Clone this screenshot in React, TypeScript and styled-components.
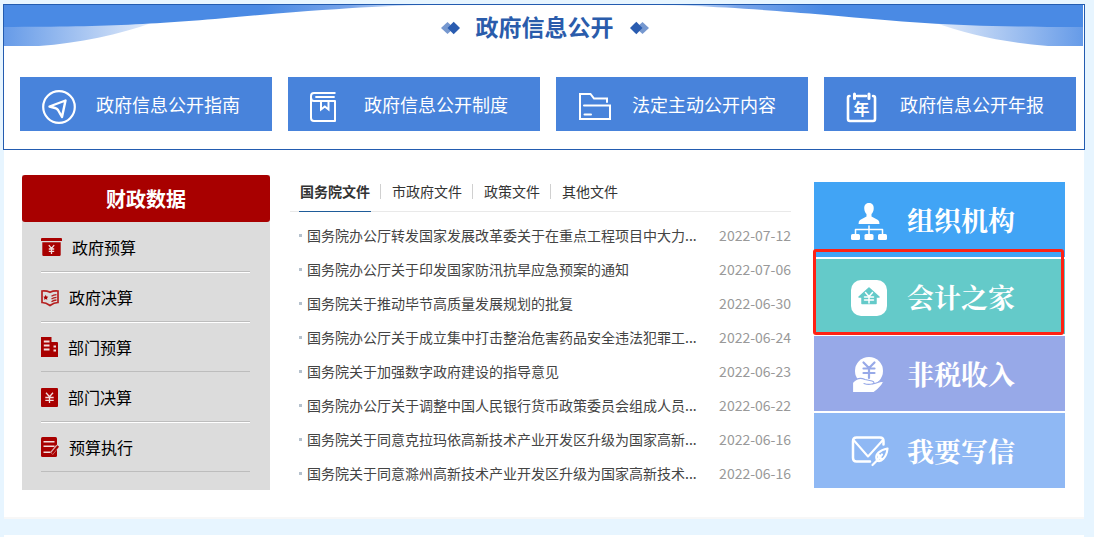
import React from "react";
import styled, { createGlobalStyle } from "styled-components";

const sans = '"Noto Sans CJK SC", "Noto Sans", sans-serif';
const serif = '"Noto Serif CJK SC", "Source Han Serif SC", "Noto Sans CJK SC", serif';

const GlobalStyle = createGlobalStyle`
  *, *::before, *::after { box-sizing: border-box; }
  body {
    margin: 0;
    background: #e7f5ff;
    font-family: ${sans};
    color: #333;
  }
  ul, h1, h2 { margin: 0; padding: 0; }
  ul { list-style: none; }
  a { color: inherit; text-decoration: none; }
  svg { display: block; flex: none; }
`;

const Page = styled.div`
  min-height: 100vh;
  padding: 4px 9px 0 3px;
  display: flex;
  flex-direction: column;
`;

const InfoSection = styled.section`
  border: 1px solid #235cb0;
  background: #fff;
  padding-bottom: 18px;
`;

const Banner = styled.header`
  display: grid;
  height: 41px;
  margin-right: 1px;
  > * { grid-area: 1 / 1; }
`;

const Wave = styled.svg`
  width: 100%;
  height: 41px;
`;

const BannerTitle = styled.div`
  display: flex;
  align-items: center;
  justify-content: center;
  gap: 16px;
  height: 41px;
  padding: 5px 0 0 2px;
`;

const TitleText = styled.h1`
  padding-bottom: 4px;
  font-size: 23px;
  line-height: 32px;
  font-weight: 700;
  color: #2a5cab;
`;

const InfoLinks = styled.nav`
  display: grid;
  grid-template-columns: repeat(4, 1fr);
  gap: 16px;
  padding: 31px 8px 0 16px;
`;

const InfoLink = styled.a`
  display: flex;
  align-items: center;
  gap: 20px;
  height: 54px;
  padding-left: 20px;
  background: #4883db;
  color: #fff;
  font-size: 18px;
  line-height: 26px;
  white-space: nowrap;
`;

const Panel = styled.main`
  display: flex;
  align-items: flex-start;
  margin: 0 1px;
  padding: 25px 19px 27px 18px;
  background: #fff;
  border-bottom: 2px solid #f7f7f7;
`;

const NextPanel = styled.div`
  flex: 1;
  min-height: 2px;
  margin: 16px 1px 0;
  background: #fff;
`;

const DataCard = styled.aside`
  flex: none;
  width: 248px;
  background: #dcdcdc;
`;

const DataHeading = styled.h2`
  height: 47px;
  border-radius: 3px;
  background: #a80000;
  color: #fff;
  font-size: 20px;
  line-height: 47px;
  font-weight: 700;
  text-align: center;
`;

const DataList = styled.ul`
  padding: 1px 20px 17px 19px;
`;

const DataItem = styled.li<{ $lit: boolean }>`
  border-bottom: 1px solid ${(p) => (p.$lit ? "#fff" : "#dcdcdc")};
`;

const DataLink = styled.a`
  display: flex;
  align-items: center;
  gap: 10px;
  height: 49px;
  border-bottom: 1px solid #bdbdbd;
  color: #000;
  font-size: 16px;
  line-height: 24px;
`;

const News = styled.section`
  flex: 1;
  min-width: 0;
  margin: 0 23px 0 20px;
`;

const Tabs = styled.div`
  display: flex;
  height: 37px;
  padding-left: 9px;
  border-bottom: 1px solid #e9e9e9;
`;

const TabCell = styled.div`
  display: flex;
  & + &::before {
    content: "";
    width: 1px;
    height: 15px;
    margin: 9px 10px 0 9px;
    background: #d0d0d0;
  }
`;

const Tab = styled.button<{ $active: boolean }>`
  height: 37px;
  padding: 0 1px 3px;
  border: 0;
  border-bottom: 1px solid ${(p) => (p.$active ? "#1f5c99" : "transparent")};
  background: none;
  color: #333;
  font-family: inherit;
  font-size: 14px;
  line-height: 33px;
  font-weight: ${(p) => (p.$active ? 700 : 400)};
  white-space: nowrap;
`;

const NewsList = styled.ul`
  padding: 6px 0 0 9px;
`;

const NewsItem = styled.li`
  display: flex;
  align-items: center;
  height: 34px;
  font-size: 14px;
  line-height: 20px;
  &::before {
    content: "";
    flex: none;
    width: 3px;
    height: 3px;
    margin-right: 5px;
    background: #b5c1cd;
  }
`;

const NewsLink = styled.a`
  flex: 1;
  min-width: 0;
  overflow: hidden;
  white-space: nowrap;
  color: #444;
`;

const NewsDate = styled.time`
  color: #999;
`;

const Services = styled.nav`
  flex: none;
  display: flex;
  flex-direction: column;
  gap: 2px;
  width: 251px;
  padding-top: 7px;
`;

const Service = styled.a<{ $color: string }>`
  position: relative;
  display: flex;
  align-items: center;
  gap: 18px;
  height: 75px;
  padding-left: 37px;
  background: ${(p) => p.$color};
  color: #fff;
  font-family: ${serif};
  font-size: 27px;
  line-height: 36px;
  font-weight: 700;
`;

const Highlight = styled.span`
  position: absolute;
  z-index: 1;
  inset: -10px 1px -1px -1px;
  border: 3px solid #ff2113;
  border-radius: 3px;
`;

const BannerWave = () => (
  <Wave viewBox="0 0 1080 41" preserveAspectRatio="none" aria-hidden="true">
    <defs>
      <linearGradient id="deep" gradientUnits="userSpaceOnUse" x1="0" x2="1080" y1="0" y2="0">
        <stop offset="0" stopColor="#4a8ae4" />
        <stop offset="0.24" stopColor="#4a8ae4" />
        <stop offset="0.32" stopColor="#78a5ea" />
        <stop offset="0.38" stopColor="#dfeafa" />
        <stop offset="0.62" stopColor="#dfeafa" />
        <stop offset="0.68" stopColor="#78a5ea" />
        <stop offset="0.76" stopColor="#4a8ae4" />
        <stop offset="1" stopColor="#4a8ae4" />
      </linearGradient>
      <linearGradient id="paleLeft" x1="0" x2="1" y1="0" y2="0">
        <stop offset="0" stopColor="#669be8" />
        <stop offset="1" stopColor="#e3ecfa" />
      </linearGradient>
      <linearGradient id="paleRight" x1="0" x2="1" y1="0" y2="0">
        <stop offset="0" stopColor="#e3ecfa" />
        <stop offset="1" stopColor="#669be8" />
      </linearGradient>
    </defs>
    <path d="M0 15H150V17C115 30 75 38 35 41H0Z" fill="url(#paleLeft)" />
    <path d="M1080 15H930V17C965 30 1005 38 1045 41H1080Z" fill="url(#paleRight)" />
    <path d="M0 0H440C400 0 350 2 256 10C160 19 110 22 0 22Z" fill="url(#deep)" />
    <path d="M1080 0H640C680 0 730 2 824 10C920 19 970 22 1080 22Z" fill="url(#deep)" />
  </Wave>
);

const Diamonds = ({ flip = false }: { flip?: boolean }) => (
  <svg width="19" height="14" viewBox="0 0 19 14" aria-hidden="true">
    <g transform={flip ? "translate(19 0) scale(-1 1)" : undefined}>
      <path d="M0 7L6.5 1L13 7L6.5 13Z" fill="#7698cf" />
      <path d="M6.5 7L12.7 .8L19 7L12.7 13.2Z" fill="#2a5cb0" />
    </g>
  </svg>
);

const LinkIcon = ({ children }: { children: React.ReactNode }) => (
  <svg width="36" height="42" viewBox="0 0 36 42" fill="none" stroke="#fff" strokeWidth="2" strokeLinecap="round" strokeLinejoin="round" aria-hidden="true">
    {children}
  </svg>
);

const infoLinks = [
  {
    label: "政府信息公开指南",
    icon: (
      <LinkIcon>
        <circle cx="19" cy="24" r="15.8" strokeWidth="2.2" />
        <path d="M9.5 23.5L25.5 17.5L22 34L18 27Q17 25.5 15 25Z" strokeWidth="2.4" />
      </LinkIcon>
    ),
  },
  {
    label: "政府信息公开制度",
    icon: (
      <LinkIcon>
        <path d="M27.5 10H6Q3 10 3 13V35Q3 38 6 38H27V18H6Q3 18 3 14.5" strokeLinecap="butt" />
        <path d="M8 14H26" strokeWidth="1.8" />
        <path d="M13 19V26.5L16.8 23.5L20.5 26.5V19" strokeWidth="2" strokeLinejoin="miter" />
      </LinkIcon>
    ),
  },
  {
    label: "法定主动公开内容",
    icon: (
      <LinkIcon>
        <path d="M31 19V15.5H18L14.5 11H4V36H34V22.5H8" strokeLinejoin="miter" />
        <path d="M8.5 31.5H15" />
      </LinkIcon>
    ),
  },
  {
    label: "政府信息公开年报",
    icon: (
      <LinkIcon>
        <path d="M5.5 13Q4 13 4 15V36Q4 38 6 38H29Q31 38 31 36V15Q31 13 29 13" strokeWidth="2.6" />
        <path d="M13 13H22" strokeWidth="2.6" />
        <path d="M10.5 11V15.5M25 11V15.5" strokeWidth="3" />
        <text x="17.5" y="31.5" textAnchor="middle" fontSize="16" fontWeight="700" fill="#fff" stroke="none">年</text>
      </LinkIcon>
    ),
  },
];

const DataIcon = ({ width, children }: { width: number; children: React.ReactNode }) => (
  <svg width={width} height="20" viewBox={`0 0 ${width} 20`} fill="none" stroke="#f3dede" strokeWidth="1.3" aria-hidden="true">
    {children}
  </svg>
);

const dataItems = [
  {
    label: "政府预算",
    lit: true,
    icon: (
      <DataIcon width={21}>
        <path d="M0 2Q0 1 1 1H20Q21 1 21 2V4H0Z" fill="#a80000" stroke="none" />
        <path d="M1.3 5.3H19.7V17.5Q19.7 19 18.5 19H2.5Q1.3 19 1.3 17.5Z" fill="#a80000" stroke="none" />
        <path d="M7.8 8.2L10.5 11.5L13.2 8.2M10.5 11.5V17M7.8 12H13.2M7.8 14.4H13.2" />
      </DataIcon>
    ),
  },
  {
    label: "政府决算",
    lit: true,
    icon: (
      <DataIcon width={18}>
        <path d="M1 4Q5.5 3.6 9 5.2Q12.5 3.6 17 4V15.5Q13 15.5 9 18.5Q5 15.5 1 15.5Z" stroke="#b52020" strokeWidth="1.7" />
        <path d="M4.7 7.8L5.5 9.5L7.3 9.8L6 11L6.3 12.8L4.7 12L3.1 12.8L3.4 11L2.3 9.8L4 9.5Z" fill="#a80000" stroke="none" />
        <path d="M10.5 9.3Q12.500 7.700 15.500 7.600M10.500 12Q12.500 10.400 15.500 10.300M10.500 14.700Q12.500 13.100 15.500 13" stroke="#b52020" />
      </DataIcon>
    ),
  },
  {
    label: "部门预算",
    lit: false,
    icon: (
      <DataIcon width={17}>
        <path d="M0 0H10.500V5H16Q17 5 17 6V20H0Z" fill="#a80000" stroke="none" />
        <path d="M2.800 4.500H8.500M2.800 8.500H8.500M2.800 12.500H8.500" strokeWidth="1.900" />
        <path d="M12.500 9.500H15M12.500 13.500H15" strokeWidth="1.900" />
      </DataIcon>
    ),
  },
  {
    label: "部门决算",
    lit: true,
    icon: (
      <DataIcon width={17}>
        <rect y="1" width="17" height="19" rx="1" fill="#a80000" stroke="none" />
        <path d="M5 5.800L8.500 9.800L12 5.800M8.500 9.800V16M4.300 10.500H12.700M4.300 13.300H12.700" />
      </DataIcon>
    ),
  },
  {
    label: "预算执行",
    lit: false,
    icon: (
      <DataIcon width={18}>
        <path d="M1.500 0H14.500Q16 0 16 1.500V18.500Q16 20 14.500 20H1.500Q0 20 0 18.500V1.500Q0 0 1.500 0Z" fill="#a80000" stroke="none" />
        <path d="M2.500 4.800H13.500M2.500 9.300H13.500M2.500 15.300H9.500" strokeWidth="1.600" />
        <path d="M10.500 16.500L16.700 8.800" stroke="#dcb4b4" strokeWidth="3.600" />
        <path d="M11 16.500L17.200 9" stroke="#a80000" strokeWidth="2" />
      </DataIcon>
    ),
  },
];

const tabs = ["国务院文件", "市政府文件", "政策文件", "其他文件"];

const news = [
  ["国务院办公厅转发国家发展改革委关于在重点工程项目中大力...", "2022-07-12"],
  ["国务院办公厅关于印发国家防汛抗旱应急预案的通知", "2022-07-06"],
  ["国务院关于推动毕节高质量发展规划的批复", "2022-06-30"],
  ["国务院办公厅关于成立集中打击整治危害药品安全违法犯罪工...", "2022-06-24"],
  ["国务院关于加强数字政府建设的指导意见", "2022-06-23"],
  ["国务院办公厅关于调整中国人民银行货币政策委员会组成人员...", "2022-06-22"],
  ["国务院关于同意克拉玛依高新技术产业开发区升级为国家高新...", "2022-06-16"],
  ["国务院关于同意滁州高新技术产业开发区升级为国家高新技术...", "2022-06-16"],
];

const ServiceIcon = ({ children }: { children: React.ReactNode }) => (
  <svg width="38" height="40" viewBox="0 0 38 40" fill="none" stroke="#fff" strokeWidth="2" strokeLinecap="round" strokeLinejoin="round" aria-hidden="true">
    {children}
  </svg>
);

const services = [
  {
    label: "组织机构",
    color: "#41a4f5",
    marked: false,
    icon: (
      <ServiceIcon>
        <path d="M18 3C21.500 3 23 5.500 22.700 9C22.500 11.500 21.500 13 20.500 14V16.500L27 20Q28.500 21 28.500 24H7.500Q7.500 21 9 20L15.500 16.500V14C14.500 13 13.500 11.500 13.300 9C13 5.500 14.500 3 18 3Z" fill="#fff" stroke="none" />
        <path d="M18 26V35M4.500 35V29.500H31.500V35" strokeWidth="1.500" />
        <g fill="#fff" stroke="none">
          <rect x="0" y="34" width="9" height="6" rx="1.500" />
          <rect x="13.500" y="34" width="9" height="6" rx="1.500" />
          <rect x="27" y="34" width="9" height="6" rx="1.500" />
        </g>
      </ServiceIcon>
    ),
  },
  {
    label: "会计之家",
    color: "#64cac9",
    marked: true,
    icon: (
      <ServiceIcon>
        <rect x="0" y="3" width="36" height="36" rx="10" fill="#fff" stroke="none" />
        <path d="M18 11L28 20H25V26.500H11V20H8Z" fill="#64cac9" stroke="#64cac9" strokeWidth="1.500" />
        <path d="M14.500 15.500L18 19.500L21.500 15.500M18 19.500V26M13.500 20H22.500M13.500 23H22.500" strokeWidth="1.500" />
      </ServiceIcon>
    ),
  },
  {
    label: "非税收入",
    color: "#97a9e8",
    marked: false,
    icon: (
      <ServiceIcon>
        <circle cx="18" cy="17" r="14" fill="#fff" stroke="none" />
        <path d="M12.500 8.500L18 14L23.500 8.500M18 14V24M12.500 14.500H23.500M12.500 19H23.500" stroke="#97a9e8" strokeWidth="2.200" />
        <path d="M1.500 28.500C6 23.500 10 23.500 14 25.500L21 27C23.500 27.500 23.500 29.500 21.500 30C26 29.500 29 26.500 32 27.500C33.500 28.500 28 35 23 38.500H1.500Z" fill="#fff" stroke="#97a9e8" strokeWidth="1.200" />
        <path d="M13 29.500Q17 31 21 30" stroke="#97a9e8" strokeWidth="1.200" />
      </ServiceIcon>
    ),
  },
  {
    label: "我要写信",
    color: "#8fb8f4",
    marked: false,
    icon: (
      <ServiceIcon>
        <path d="M19 30.500H5.500Q2 30.500 2 27V10Q2 6.500 5.500 6.500H29Q32.500 6.500 32.500 10V13.500" strokeWidth="2.500" />
        <path d="M3 9.500L17 25.500L31.500 9.500" strokeWidth="2" />
        <path d="M21.500 34L26 29.500C30 31.500 35.500 27 36.500 17.500C29.500 19 23 23 26 29.500M26 29.500L31 23.500M28 24V27.500H30.500" strokeWidth="2.200" />
      </ServiceIcon>
    ),
  },
];

export default function App() {
  return (
    <>
      <GlobalStyle />
      <Page>
        <InfoSection>
          <Banner>
            <BannerWave />
            <BannerTitle>
              <Diamonds />
              <TitleText>政府信息公开</TitleText>
              <Diamonds flip />
            </BannerTitle>
          </Banner>
          <InfoLinks>
            {infoLinks.map((item) => (
              <InfoLink href="#" key={item.label}>
                {item.icon}
                {item.label}
              </InfoLink>
            ))}
          </InfoLinks>
        </InfoSection>

        <Panel>
          <DataCard>
            <DataHeading>财政数据</DataHeading>
            <DataList>
              {dataItems.map((item) => (
                <DataItem key={item.label} $lit={item.lit}>
                  <DataLink href="#">
                    {item.icon}
                    {item.label}
                  </DataLink>
                </DataItem>
              ))}
            </DataList>
          </DataCard>

          <News>
            <Tabs>
              {tabs.map((tab, i) => (
                <TabCell key={tab}>
                  <Tab type="button" $active={i === 0}>
                    {tab}
                  </Tab>
                </TabCell>
              ))}
            </Tabs>
            <NewsList>
              {news.map(([title, date]) => (
                <NewsItem key={title}>
                  <NewsLink href="#">{title}</NewsLink>
                  <NewsDate dateTime={date}>{date}</NewsDate>
                </NewsItem>
              ))}
            </NewsList>
          </News>

          <Services>
            {services.map((item) => (
              <Service href="#" key={item.label} $color={item.color}>
                {item.icon}
                {item.label}
                {item.marked && <Highlight />}
              </Service>
            ))}
          </Services>
        </Panel>

        <NextPanel />
      </Page>
    </>
  );
}
